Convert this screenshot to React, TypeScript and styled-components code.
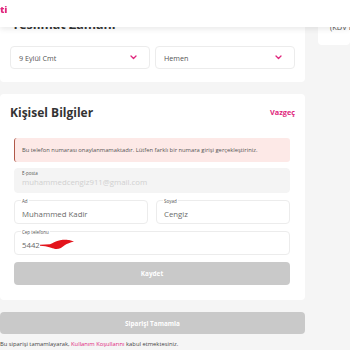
import React from "react";
import styled, { createGlobalStyle } from "styled-components";

const GlobalStyle = createGlobalStyle`
  html, body {
    margin: 0;
    padding: 0;
    background: #f5f5f5;
    font-family: "Open Sans", "Noto Sans", sans-serif;
    overflow: hidden;
  }
`;

const PINK = "#e0257c";

const Header = styled.header`
  position: fixed;
  top: 0;
  left: 0;
  right: 0;
  height: 27px;
  background: #fff;
  box-shadow: 0 2px 6px rgba(0, 0, 0, 0.09);
  z-index: 10;
`;

const Logo = styled.span`
  display: block;
  margin-top: 4px;
  font-size: 9.5px;
  font-weight: 800;
  color: ${PINK};
  line-height: 12px;
`;

const Page = styled.div`
  display: grid;
  grid-template-columns: 305px 1fr;
  column-gap: 13px;
  align-items: start;
`;

const MainColumn = styled.div`
  display: flex;
  flex-direction: column;
`;

const Card = styled.section`
  background: #fff;
  border-radius: 0 0 4px 4px;
`;

const DeliveryCard = styled(Card)`
  padding: 13px 10px 13px 10px;
`;

const DeliveryTitle = styled.h2`
  margin: 0 0 9px 2px;
  font-size: 12.5px;
  line-height: 24px;
  font-weight: 700;
  color: #333;
`;

const SelectRow = styled.div`
  display: grid;
  grid-template-columns: 1fr 1fr;
  gap: 5px;
`;

const Select = styled.div`
  height: 23px;
  box-sizing: border-box;
  border: 1px solid #ececec;
  border-radius: 4px;
  display: flex;
  align-items: center;
  justify-content: space-between;
  padding: 0 12px 0 8px;
  font-size: 7.2px;
  color: #555;
`;

const PersonalCard = styled(Card)`
  margin-top: 12px;
  border-radius: 4px;
  padding: 4px 10px 15px 10px;
`;

const CardHead = styled.div`
  display: flex;
  justify-content: space-between;
  align-items: center;
  height: 28px;
`;

const Title = styled.h2`
  margin: 0;
  font-size: 12px;
  font-weight: 700;
  color: #333;
`;

const Cancel = styled.a`
  font-size: 7.3px;
  font-weight: 700;
  color: ${PINK};
`;

const Form = styled.div`
  display: flex;
  flex-direction: column;
  gap: 7px;
  padding: 0 5px 0 4px;
  margin-top: 12px;
`;

const Alert = styled.div`
  height: 24px;
  box-sizing: border-box;
  background: #fde9e7;
  border-left: 1.5px solid #b0594a;
  border-radius: 3px;
  display: flex;
  align-items: center;
  padding-left: 7px;
  font-size: 5.8px;
  color: #555;
  margin-bottom: -1px;
`;

const Field = styled.div<{ $disabled?: boolean }>`
  position: relative;
  height: ${(p) => (p.$disabled ? "25px" : "24px")};
  box-sizing: border-box;
  border: 1px solid ${(p) => (p.$disabled ? "#f4f4f4" : "#ececec")};
  background: ${(p) => (p.$disabled ? "#f4f4f4" : "#fff")};
  border-radius: 4px;
  display: flex;
  align-items: center;
  padding: 3px 0 0 7px;
  font-size: 7.8px;
  color: ${(p) => (p.$disabled ? "#d0d0d0" : "#6a6a6a")};
`;

const FieldLabel = styled.span<{ $disabled?: boolean }>`
  position: absolute;
  left: 6px;
  top: ${(p) => (p.$disabled ? "1px" : "-3px")};
  padding: 0 1px;
  background: ${(p) => (p.$disabled ? "transparent" : "#fff")};
  font-size: 4.5px;
  line-height: 6px;
  color: #555;
`;

const Pair = styled.div`
  display: grid;
  grid-template-columns: 1fr 1fr;
  gap: 8px;
`;

const Redacted = styled.span`
  display: inline-flex;
  align-items: center;
`;

const Button = styled.button<{ $wide?: boolean }>`
  border: none;
  width: 100%;
  height: ${(p) => (p.$wide ? "22px" : "23px")};
  border-radius: 4px;
  background: #c9c9c9;
  color: #fff;
  font-family: inherit;
  font-size: 6.4px;
  font-weight: 700;
`;

const Submit = styled.div`
  margin-top: 12px;
  display: flex;
`;

const Terms = styled.p`
  margin: 6px 0 0;
  font-size: 5.8px;
  color: #444;
`;

const TermsLink = styled.span`
  color: ${PINK};
`;

const SideCard = styled.aside`
  background: #fff;
  height: 45px;
  border-radius: 0 0 4px 4px;
  padding: 22px 0 0 12px;
  box-sizing: border-box;
  font-size: 7.5px;
  color: #555;
  white-space: nowrap;
  overflow: hidden;
`;

const Chevron = () => (
  <svg width="7" height="5" viewBox="0 0 7 5">
    <path d="M1 1l2.5 2.5L6 1" fill="none" stroke={PINK} strokeWidth="1.3" strokeLinecap="round" strokeLinejoin="round" />
  </svg>
);

const Scribble = () => (
  <svg width="34" height="13" viewBox="0 0 34 13">
    <path
      d="M0 6.8 L10 6.2 C13 5 16 3 20 2.2 C24 1.4 28 1.6 30 2.2 L34 3.4 C30 4.6 27 5.4 25 7 C22 9.5 19 11.5 15 11 C12 10.2 8 8.2 0 7.8 Z"
      fill="#e3141c"
    />
  </svg>
);

const App = () => {
  return (
    <>
      <GlobalStyle />
      <Header>
        <Logo>ti</Logo>
      </Header>
      <Page>
        <MainColumn>
          <DeliveryCard>
            <DeliveryTitle>Teslimat Zamanı</DeliveryTitle>
            <SelectRow>
              <Select>
                9 Eylül Cmt
                <Chevron />
              </Select>
              <Select>
                Hemen
                <Chevron />
              </Select>
            </SelectRow>
          </DeliveryCard>

          <PersonalCard>
            <CardHead>
              <Title>Kişisel Bilgiler</Title>
              <Cancel>Vazgeç</Cancel>
            </CardHead>
            <Form>
              <Alert>
                Bu telefon numarası onaylanmamaktadır. Lütfen farklı bir numara girişi gerçekleştiriniz.
              </Alert>
              <Field $disabled>
                <FieldLabel $disabled>E-posta</FieldLabel>
                muhammedcengiz911@gmail.com
              </Field>
              <Pair>
                <Field>
                  <FieldLabel>Ad</FieldLabel>
                  Muhammed Kadir
                </Field>
                <Field>
                  <FieldLabel>Soyad</FieldLabel>
                  Cengiz
                </Field>
              </Pair>
              <Field>
                <FieldLabel>Cep telefonu</FieldLabel>
                <Redacted>
                  5442
                  <Scribble />
                </Redacted>
              </Field>
              <Button>Kaydet</Button>
            </Form>
          </PersonalCard>

          <Submit>
            <Button $wide>Siparişi Tamamla</Button>
          </Submit>
          <Terms>
            Bu siparişi tamamlayarak, <TermsLink>Kullanım Koşullarını</TermsLink> kabul etmektesiniz.
          </Terms>
        </MainColumn>
        <SideCard>(KDV Dahil)</SideCard>
      </Page>
    </>
  );
};

export default App;
